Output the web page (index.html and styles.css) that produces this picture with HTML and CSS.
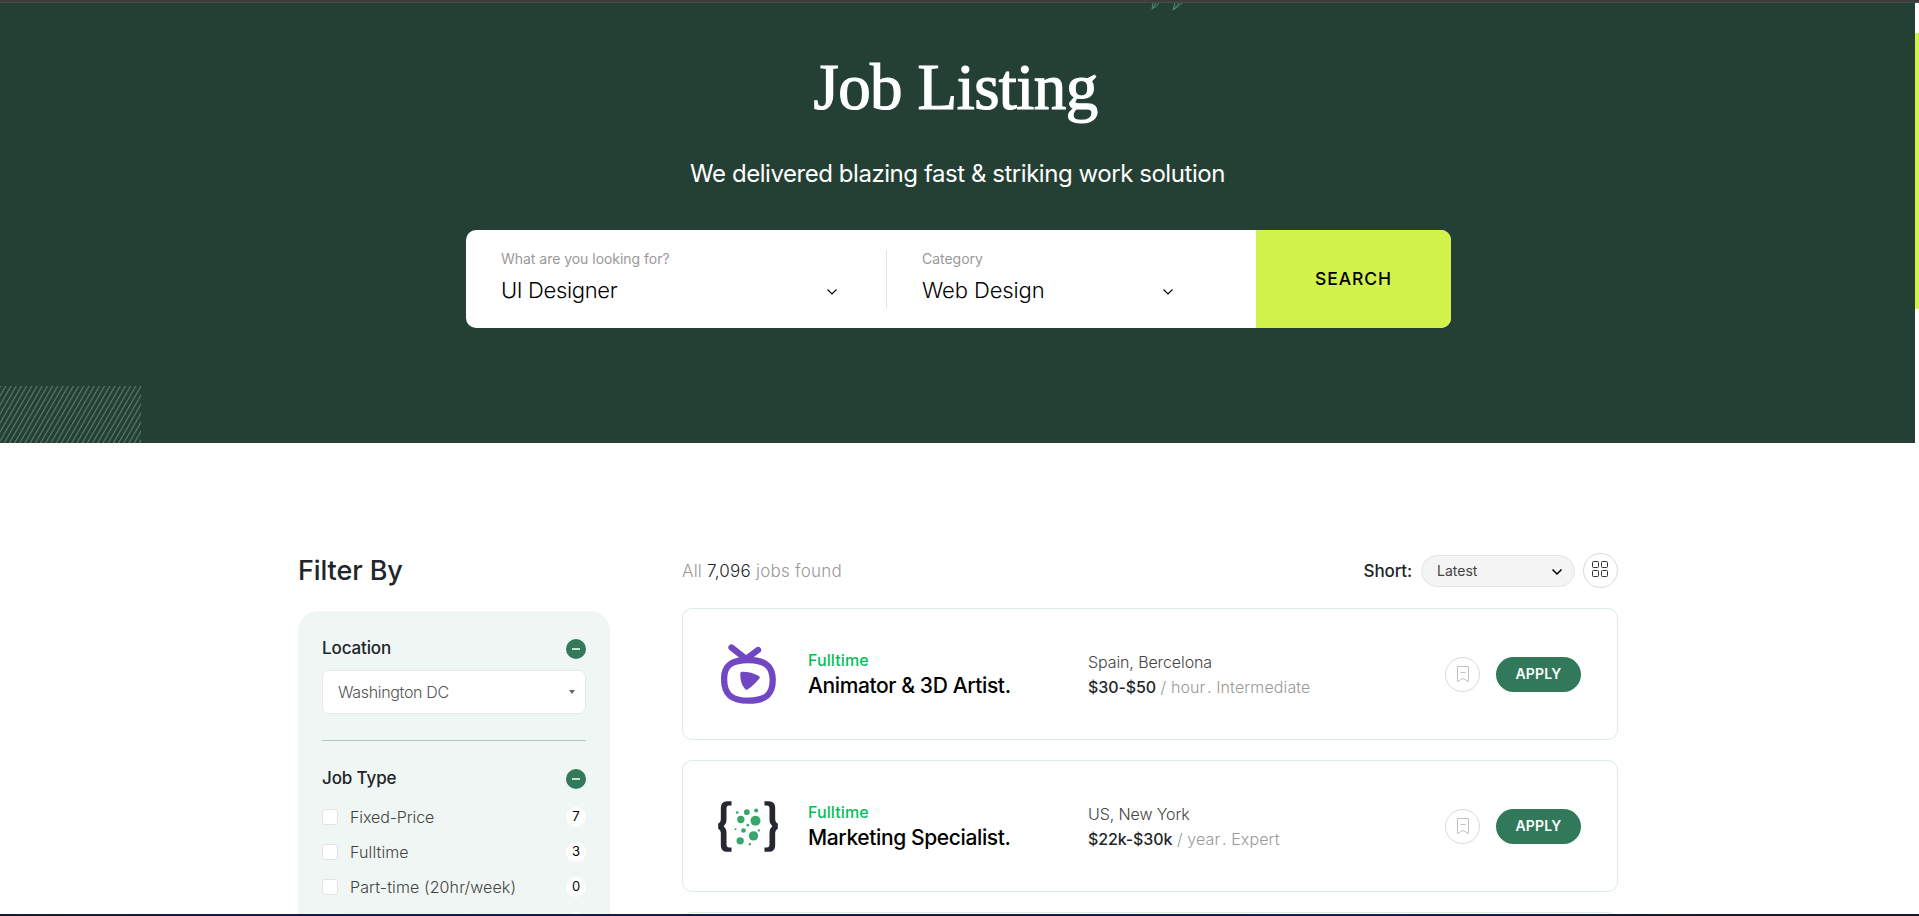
FILE: index.html
```html
<!DOCTYPE html>
<html lang="en">
<head>
<meta charset="utf-8">
<title>Job Listing</title>
<link rel="stylesheet" href="styles.css">
</head>
<body>
<div class="top-edge"></div>
<div class="viewport">
  <div class="page">
    <header class="hero">
      <svg class="hero-mark" width="36" height="8" viewBox="0 0 36 8"><path d="M4 0 L3 6 Q7 4.500 10 0 M7 0 L4 5 M26 0 L24 7 Q29 4 33 0 M30 0 L25 6"/></svg>
      <h1 class="hero-title">Job Listing</h1>
      <p class="hero-sub">We delivered blazing fast &amp; striking work solution</p>
      <form class="search">
        <div class="field field-what">
          <span class="field-label">What are you looking for?</span>
          <div class="field-value"><span>UI Designer</span><svg class="chev" width="12" height="8" viewBox="0 0 12 8"><path d="M1.500 1.500 L6 6 L10.500 1.500"/></svg></div>
        </div>
        <div class="field field-cat">
          <span class="field-label">Category</span>
          <div class="field-value"><span>Web Design</span><svg class="chev" width="12" height="8" viewBox="0 0 12 8"><path d="M1.500 1.500 L6 6 L10.500 1.500"/></svg></div>
        </div>
        <button class="search-btn" type="button">SEARCH</button>
      </form>
      <svg class="hero-stripes" width="141" height="57"><defs><pattern id="stripe" width="5.2" height="57" patternUnits="userSpaceOnUse" patternTransform="skewX(-30)"><rect width="1.2" height="57" fill="#5c7e70"/></pattern></defs><rect width="141" height="57" fill="url(#stripe)"/></svg>
    </header>
    <main class="main">
      <aside class="filters">
        <h2 class="filters-title">Filter By</h2>
        <div class="panel">
          <div class="group-head"><span>Location</span><i class="minus"></i></div>
          <div class="select"><span>Washington DC</span><i class="caret"></i></div>
          <div class="rule"></div>
          <div class="group-head"><span>Job Type</span><i class="minus"></i></div>
          <ul class="checks">
            <li><i class="box"></i><span class="name">Fixed-Price</span><b>7</b></li>
            <li><i class="box"></i><span class="name">Fulltime</span><b>3</b></li>
            <li><i class="box"></i><span class="name">Part-time (20hr/week)</span><b>0</b></li>
            <li><i class="box"></i><span class="name"></span><b></b></li>
          </ul>
        </div>
      </aside>
      <section class="results">
        <div class="toolbar">
          <p class="total">All <span>7,096</span> jobs found</p>
          <div class="sort">
            <span class="sort-label">Short:</span>
            <div class="sort-select"><span>Latest</span><svg class="chev bold" width="12" height="8" viewBox="0 0 12 8"><path d="M1.500 1.500 L6 6 L10.500 1.500"/></svg></div>
            <div class="round dark"><svg width="17" height="17" viewBox="0 0 17 17"><rect x=".5" y=".5" width="6" height="6" rx="1"/><rect x="9.500" y=".5" width="6" height="6" rx="1"/><rect x=".5" y="9.500" width="6" height="6" rx="1"/><rect x="9.500" y="9.500" width="6" height="6" rx="1"/></svg></div>
          </div>
        </div>
        <article class="card">
          <div class="logo shifted"><svg width="58" height="62" viewBox="20 13 58 62"><g fill="none" stroke="#7247c4" stroke-width="6.3" stroke-linecap="round"><path d="M31.500 17.500 L46 29 L58 20"/><path d="M48.500 30 C66 30 72.300 37 72.700 49 C73.100 64 66 70.700 48.500 70.700 C31 70.700 24.100 64 24.100 49 C24.100 35 32 30 48.500 30 Z"/></g><path d="M42 43.500 C49 43.500 53 44.500 58 47.500 C53 53.500 50.500 56 46.500 58 C43.500 55 42 49 42 43.500 Z" fill="#7247c4" stroke="#7247c4" stroke-width="3.500" stroke-linejoin="round"/></svg></div>
          <div class="job"><span class="type">Fulltime</span><h3>Animator &amp; 3D Artist.</h3></div>
          <div class="meta"><span class="place">Spain, Bercelona</span><span class="pay"><b>$30-$50</b> / hour&#8202;. Intermediate</span></div>
          <div class="actions"><div class="round"><svg width="14" height="18" viewBox="0 0 14 18"><path d="M1.500 1.500 H12.500 V16.500 L7 13.500 L1.500 16.500 Z M4.500 7.500 H9.500"/></svg></div><button class="apply" type="button">APPLY</button></div>
        </article>
        <article class="card">
          <div class="logo"><svg width="60" height="51" viewBox="144.500 782.500 180 153"><g fill="#252732"><path id="brace" d="M185 783 H172 Q153 783 153 803 V838 Q153 846 145 851 V865 Q153 870 153 878 V915 Q153 935 172 935 H185 V922 H178 Q170 922 170 913 V878 Q170 865 161 858 Q170 851 170 838 V805 Q170 796 178 796 H185 Z"/><use href="#brace" transform="translate(469 0) scale(-1 1)"/></g><g fill="#38a56d"><circle cx="202" cy="817" r="4"/><circle cx="231" cy="816" r="8.500"/><circle cx="259" cy="811" r="6"/><circle cx="213" cy="838" r="11"/><circle cx="257" cy="842" r="15"/><circle cx="234" cy="855" r="4"/><circle cx="197" cy="867" r="3"/><circle cx="221" cy="871" r="7"/><circle cx="267" cy="871" r="3.500"/><circle cx="251" cy="887" r="14"/><circle cx="211" cy="902" r="11"/><circle cx="240" cy="912" r="3.500"/></g></svg></div>
          <div class="job"><span class="type">Fulltime</span><h3>Marketing Specialist.</h3></div>
          <div class="meta"><span class="place">US, New York</span><span class="pay"><b>$22k-$30k</b> / year&#8202;. Expert</span></div>
          <div class="actions"><div class="round"><svg width="14" height="18" viewBox="0 0 14 18"><path d="M1.500 1.500 H12.500 V16.500 L7 13.500 L1.500 16.500 Z M4.500 7.500 H9.500"/></svg></div><button class="apply" type="button">APPLY</button></div>
        </article>
        <article class="card"></article>
      </section>
    </main>
  </div>
  <div class="scrollbar"><div class="thumb"></div></div>
</div>
<div class="bottom-edge"></div>
</body>
</html>
```
FILE: styles.css
```css
* { box-sizing: border-box; }
body { margin: 0; height: 916px; overflow: hidden; display: flex; flex-direction: column; background: #fff; color: #212529; font-family: Inter, "Liberation Sans", sans-serif; white-space: nowrap; }
h1, h2, h3, p, ul { margin: 0; padding: 0; list-style: none; }
button { border: 0; padding: 0; font-family: inherit; }
svg { display: block; flex: none; }
.top-edge { height: 3px; flex: none; background: #3d3d3d; border-bottom: 1px solid #4a4a4a; }
.viewport { height: 911px; flex: none; display: flex; overflow: hidden; }
.bottom-edge { height: 2px; flex: none; background: linear-gradient(90deg, #131c2e, #101c55 20%, #131c3a 50%, #101c55 70%, #161a2c 90%); }
.page { width: 1915px; flex: none; }
.scrollbar { width: 4px; padding-top: 30px; background: #fff; }
.thumb { height: 276px; background: #d2f34c; }

.hero { position: relative; height: 440px; padding-top: 44px; background: #244034; display: flex; flex-direction: column; align-items: center; }
.hero-mark { position: absolute; left: 1149px; top: 0; fill: none; stroke: #4f8a74; stroke-width: 1; }
.hero-stripes { position: absolute; left: 0; bottom: 0; }
.hero-title { margin-right: 4px; font: 400 65px/80px "Liberation Serif", serif; letter-spacing: -0.6px; color: #fff; -webkit-text-stroke: 1.2px #fff; }
.hero-sub { margin-top: 27px; font-size: 24px; line-height: 40px; letter-spacing: -0.45px; color: #fff; }
.search { margin: 36px 0 0 2px; width: 985px; height: 98px; display: flex; border-radius: 10px; overflow: hidden; background: #fff; }
.field { padding: 19px 0 0 35px; }
.field-what { width: 421px; background: linear-gradient(#e3e3e3, #e3e3e3) right 20px / 1px 58px no-repeat; }
.field-what .field-value { width: 337px; letter-spacing: -0.35px; }
.field-cat { width: 369px; }
.field-cat .field-value { width: 252px; letter-spacing: -0.1px; }
.field-label { display: block; font-size: 14px; line-height: 20px; letter-spacing: -0.03px; color: #999; }
.field-value { margin-top: 6px; display: flex; justify-content: space-between; align-items: center; font-size: 22px; line-height: 30px; font-weight: 300; color: #000; }
.chev { fill: none; stroke: #000; stroke-width: 1.15; margin-top: 3px; }
.chev.bold { stroke-width: 1.5; }
.search-btn { width: 195px; padding-bottom: 2px; background: #d2f34c; color: #000; font-size: 17.5px; font-weight: 450; letter-spacing: 0.9px; }

.main { padding: 108px 0 0 298px; display: grid; grid-template-columns: 312px 936px; column-gap: 72px; }
.filters-title { font-size: 27px; line-height: 40px; font-weight: 500; letter-spacing: -0.1px; }
.panel { margin-top: 20px; padding: 28px 24px 0; height: 400px; border-radius: 20px 20px 0 0; background: #eff6f3; }
.group-head { height: 20px; display: flex; justify-content: space-between; align-items: center; font-size: 17px; line-height: 20px; font-weight: 500; letter-spacing: -0.12px; }
.group-head span { padding-bottom: 2px; }
.minus { width: 20px; height: 20px; border-radius: 50%; background: linear-gradient(#c9ded5, #c9ded5) center / 8px 2px no-repeat #31795a; }
.select { margin-top: 11px; height: 44px; padding: 0 10px 0 15px; display: flex; align-items: center; justify-content: space-between; border: 1px solid #e8e8e8; border-radius: 7px; background: #fff; font-size: 16px; font-weight: 300; letter-spacing: -0.33px; color: #555; }
.caret { border: 3.5px solid transparent; border-top: 4px solid #666; border-bottom: 0; }
.rule { height: 1px; margin: 26px 0 28px; background: #a9cfc1; }
.checks { margin-top: 18px; display: grid; row-gap: 15px; }
.checks li { height: 20px; display: flex; align-items: center; }
.box { width: 16px; height: 16px; border: 1px solid #e3e3e3; border-radius: 3px; background: #fff; }
.name { flex: 1; margin-left: 12px; font-size: 16px; font-weight: 300; letter-spacing: 0.12px; color: #444; }
.checks li:first-child .name { letter-spacing: -0.1px; }
.checks b { width: 20px; height: 20px; border-radius: 50%; background: #fff; color: #000; font-size: 13px; line-height: 19px; font-weight: 400; text-align: center; }

.results { padding-top: 2px; display: flex; flex-direction: column; gap: 20px; }
.toolbar { height: 35px; display: flex; align-items: center; justify-content: space-between; }
.total { font-size: 17px; font-weight: 300; letter-spacing: 0.23px; color: #999; }
.total span { color: #212529; }
.sort { display: flex; align-items: center; }
.sort-label { font-size: 17px; font-weight: 500; letter-spacing: -0.15px; }
.sort-select { width: 154px; height: 32px; margin: 0 8px 0 9px; padding: 0 11px 0 15px; display: flex; align-items: center; justify-content: space-between; border: 1px solid #e5e5e5; border-radius: 16px; background: #f4f4f4; font-size: 14px; color: #444; }
.round { width: 35px; height: 35px; display: flex; align-items: center; justify-content: center; border: 1px solid #d9d9d9; border-radius: 50%; }
.round svg { fill: none; stroke: #c0c0c0; stroke-width: 1; margin: -1px 0 0 1px; }
.round.dark svg { stroke: #333; margin: -2px 0 0 0; }

.card { height: 132px; flex: none; display: grid; grid-template-columns: 60px 280px 300px 1fr; padding: 0 36px 0 35px; border: 1px solid #dcebe5; border-radius: 10px; }
.logo { display: flex; align-items: center; justify-content: center; }
.logo.shifted { padding-left: 2px; }
.job { padding: 41px 0 0 30px; }
.type { display: block; font-size: 16px; line-height: 20px; font-weight: 500; letter-spacing: 0.1px; color: #00bf58; }
.job h3 { margin-top: 2px; font-size: 21px; line-height: 28px; font-weight: 500; letter-spacing: -0.38px; color: #000; }
.meta { padding: 41px 0 0 30px; display: flex; flex-direction: column; font-size: 16px; line-height: 25px; font-weight: 300; }
.place { letter-spacing: -0.1px; color: #444; }
.pay { letter-spacing: 0.12px; color: #999; }
.pay b { font-weight: 500; letter-spacing: -0.1px; color: #212529; }
.actions { display: flex; align-items: center; justify-content: flex-end; gap: 16px; }
.apply { width: 85px; height: 35px; padding-bottom: 1px; border-radius: 18px; background: #31795a; color: #fff; font-size: 14px; font-weight: 600; letter-spacing: 0.15px; }
```
